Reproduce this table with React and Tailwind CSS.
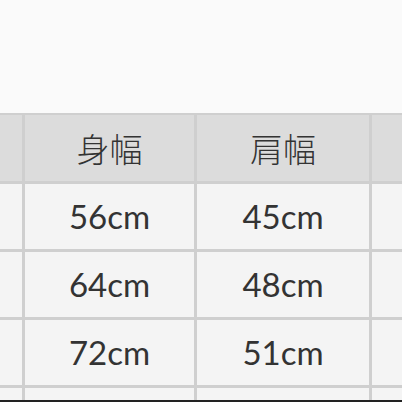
import React from 'react';

const rows = [
  ['', '56cm', '45cm', ''],
  ['', '64cm', '48cm', ''],
  ['', '72cm', '51cm', ''],
  ['', '', '', ''],
];

const App = () => {
  return (
    <div
      className="w-[402px] h-[402px] overflow-hidden bg-[#fafafa] flex flex-col relative"
      style={{ fontFamily: 'Lato, "Noto Sans CJK JP", sans-serif' }}
    >
      <div className="h-[1px] bg-[#e6e6e6]" />
      <div className="h-[113px] shrink-0" />
      <div className="grid grid-cols-[22px_169px_172px_1fr] gap-[3px] bg-[#cfcfcf] py-[2px] text-[#333]">
        {['', '身幅', '肩幅', ''].map((h, i) => (
          <div
            key={i}
            className="h-[66px] bg-[#dcdcdc] flex items-center justify-center text-[33px] leading-none"
            style={{ fontFamily: '"Noto Sans CJK JP", sans-serif', fontWeight: 300 }}
          >
            {h}
          </div>
        ))}
        {rows.map((r, ri) =>
          r.map((c, ci) => (
            <div
              key={`${ri}-${ci}`}
              className="h-[65px] bg-[#f4f4f4] flex items-center justify-center text-[33px] leading-none"
            >
              {c}
            </div>
          ))
        )}
      </div>
      <div className="absolute left-0 right-0 bottom-0 h-[2px] bg-[#222]" />
    </div>
  );
};

export default App;
